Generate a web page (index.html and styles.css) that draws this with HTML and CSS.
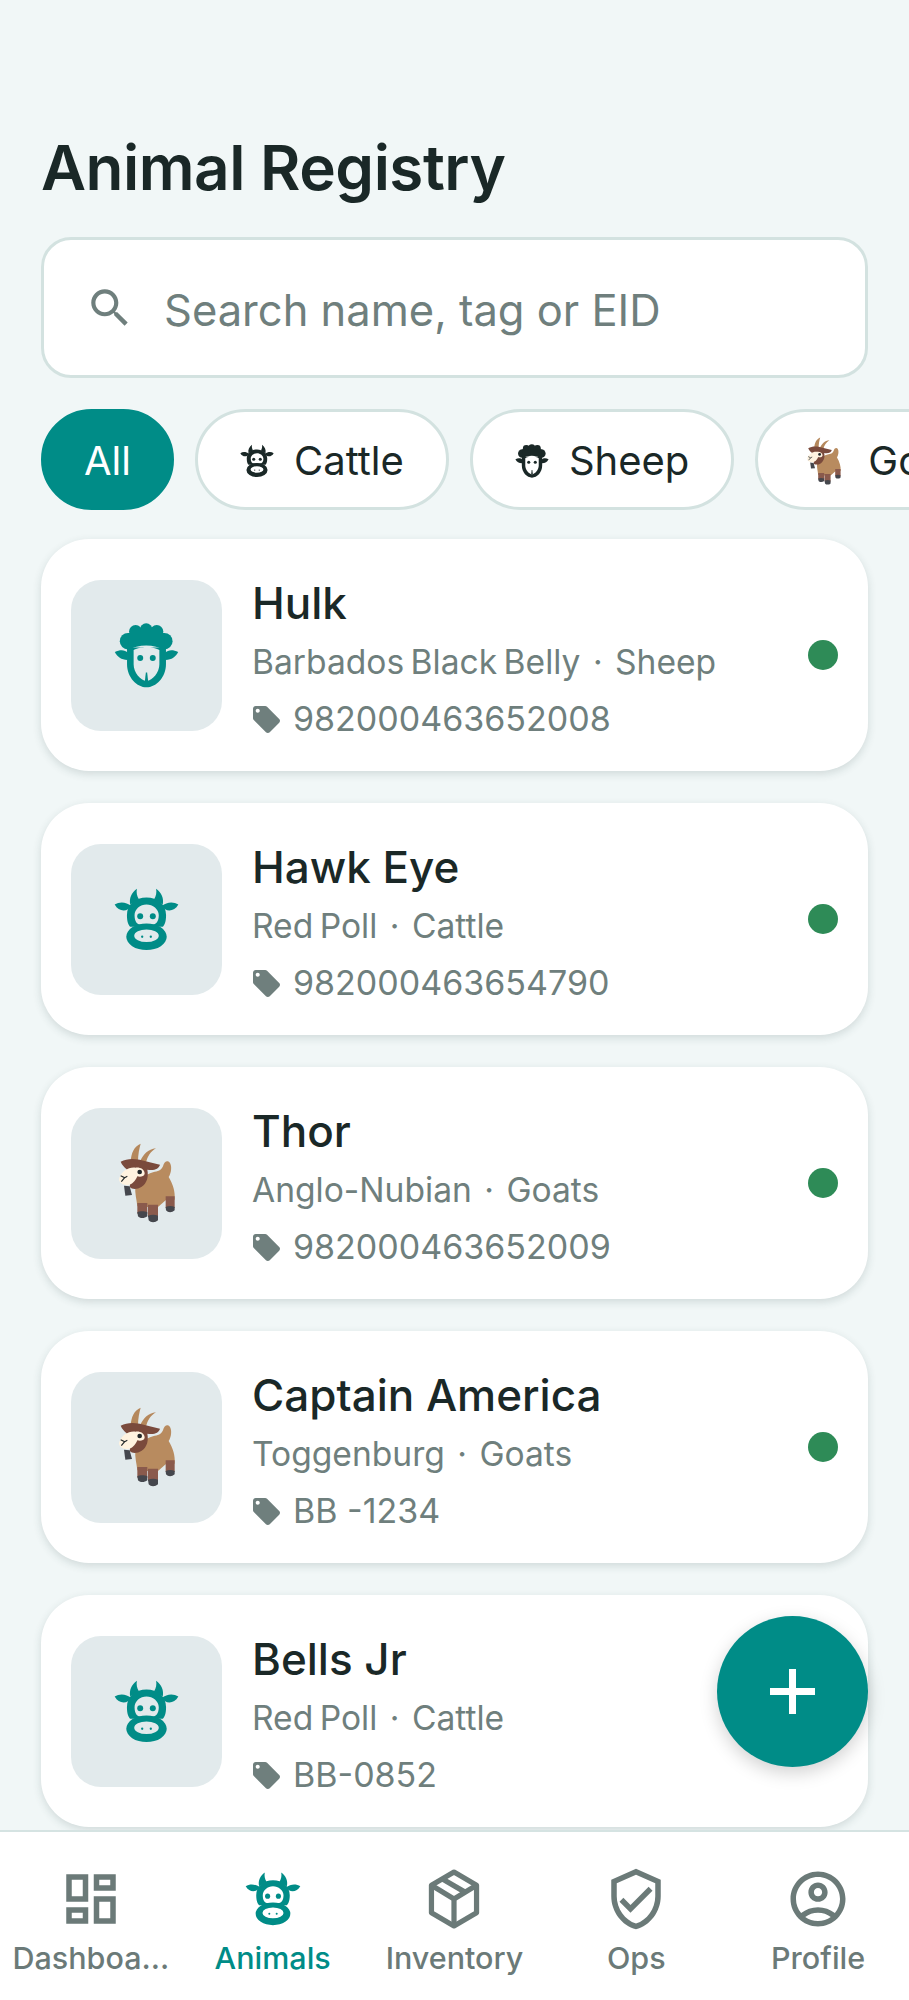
FILE: index.html
```html
<!DOCTYPE html>
<html lang="en">
<head>
    <meta charset="UTF-8">
    <meta name="viewport" content="width=device-width, initial-scale=1.0">
    <title>Animal Registry</title>
    <link rel="stylesheet" href="styles.css">
</head>
<body>

<!-- Animal icons, reused in chips, cards and nav -->
<svg class="icon-defs" aria-hidden="true">
    <defs>
        <symbol id="cow" viewBox="13 18 196 190">
            <path d="M82 20C66 32 58 48 62 68L88 52C82 42 80 32 82 20Z"/>
            <path d="M140 20C156 32 164 48 160 68L134 52C140 42 142 32 140 20Z"/>
            <path d="M15 68C30 58 50 60 65 72C55 90 28 92 15 68Z"/>
            <path d="M207 68C192 58 172 60 157 72C167 90 194 92 207 68Z"/>
            <path fill-rule="evenodd" d="M52 100C52 68 78 47 111 47C144 47 170 68 170 100C170 120 165 130 160 135H62C57 130 52 120 52 100ZM75 100C75 82 92 68 111 68C130 68 148 82 148 100C148 118 140 128 128 128H94C82 128 75 118 75 100Z"/>
            <path fill-rule="evenodd" d="M50 165a61 40 0 1 0 122 0a61 40 0 1 0 -122 0ZM74 162a37 19 0 1 0 74 0a37 19 0 1 0 -74 0Z"/>
            <circle cx="92" cy="103" r="9"/>
            <circle cx="130" cy="103" r="9"/>
            <circle cx="98" cy="165" r="3.5"/>
            <circle cx="124" cy="165" r="3.5"/>
        </symbol>
        <symbol id="sheep" viewBox="14 10 194 197">
            <circle cx="55" cy="65" r="25"/>
            <circle cx="78" cy="36" r="20"/>
            <circle cx="110" cy="30" r="19"/>
            <circle cx="142" cy="36" r="20"/>
            <circle cx="165" cy="65" r="25"/>
            <path d="M55 40H165V90C150 84 130 78 110 78C90 78 70 84 55 90Z"/>
            <path d="M15 98C30 90 45 90 55 100L53 122C35 122 22 112 15 98Z"/>
            <path d="M207 98C192 90 177 90 167 100L169 122C187 122 200 112 207 98Z"/>
            <path fill-rule="evenodd" d="M52 84H170V135C170 175 140 205 111 205C82 205 52 175 52 135ZM72 92V135C72 160 92 183 111 186C130 183 150 160 150 135V92C135 82 87 82 72 92Z"/>
            <path d="M109 160H113L116 187H106Z"/>
            <circle cx="92" cy="116" r="9"/>
            <circle cx="130" cy="116" r="9"/>
        </symbol>
        <symbol id="goat" viewBox="20 20 174 240">
            <path fill="#b5885c" d="M58 74C60 50 68 30 88 22C84 35 80 55 80 76Z"/>
            <path fill="#b5885c" d="M86 76C95 55 110 38 134 36C118 46 108 60 104 80Z"/>
            <path fill="#b88b5f" d="M72 150C90 130 100 115 125 108C140 105 150 102 155 90C158 75 170 70 176 80C182 90 180 110 172 122C185 145 192 165 190 190L163 192L140 212H108L78 210C76 190 70 170 72 150Z"/>
            <path fill="#8a5a4c" d="M78 200H108V232H78ZM110 205H140V242H110ZM163 180H190V215H163Z"/>
            <path fill="#45474d" d="M78 228C85 224 100 224 108 228V240C100 247 85 247 80 240ZM110 238C120 234 132 234 140 238V252C132 260 118 260 112 252ZM163 212C172 208 182 208 190 212V222C182 230 170 230 164 222Z"/>
            <path fill="#7a4a3c" d="M28 76C45 68 60 66 85 70C105 75 125 80 146 85C142 98 128 104 108 100C112 120 108 140 90 152C78 160 62 160 55 152C60 130 55 110 45 98C38 92 32 85 28 76Z"/>
            <path fill="#45474d" d="M38 148L55 150L62 176L42 178Z"/>
            <path fill="#fff3e0" d="M24 124C32 105 50 92 72 94C85 92 100 98 100 112C98 122 85 122 78 120C72 135 60 148 45 146C30 144 20 135 24 124Z"/>
            <circle fill="#22282a" cx="85" cy="107" r="7"/>
            <path fill="none" stroke="#22282a" stroke-width="3.5" d="M28 118L40 124L30 136M40 124L48 120"/>
        </symbol>
        <symbol id="tag" viewBox="2 2 20 20">
            <path d="M21.41 11.58l-9-9C12.05 2.22 11.55 2 11 2H4c-1.1 0-2 .9-2 2v7c0 .55.22 1.05.59 1.42l9 9c.36.36.86.58 1.41.58.55 0 1.05-.22 1.41-.59l7-7c.37-.36.59-.86.59-1.41 0-.55-.23-1.06-.59-1.42zM5.5 7C4.67 7 4 6.33 4 5.5S4.67 4 5.5 4 7 4.67 7 5.5 6.33 7 5.5 7z"/>
        </symbol>
    </defs>
</svg>

<div class="app">
    <h1 class="title">Animal Registry</h1>

    <div class="search">
        <svg class="search-icon" viewBox="0 0 24 24"><path d="M15.5 14h-.79l-.28-.27C15.41 12.59 16 11.11 16 9.5 16 5.91 13.09 3 9.5 3S3 5.91 3 9.5 5.91 16 9.5 16c1.61 0 3.09-.59 4.23-1.57l.27.28v.79l5 4.99L20.49 19l-4.99-5zm-6 0C7.01 14 5 11.99 5 9.5S7.01 5 9.5 5 14 7.01 14 9.5 11.99 14 9.5 14z"/></svg>
        <span class="search-text">Search name, tag or EID</span>
    </div>

    <div class="chips">
        <div class="chip active">All</div>
        <div class="chip"><svg class="chip-icon"><use href="#cow"/></svg>Cattle</div>
        <div class="chip"><svg class="chip-icon"><use href="#sheep"/></svg>Sheep</div>
        <div class="chip"><svg class="chip-goat"><use href="#goat"/></svg>Goats</div>
    </div>

    <div class="list">
        <div class="card">
            <div class="thumb"><svg class="thumb-icon"><use href="#sheep"/></svg></div>
            <div class="info">
                <div class="name">Hulk</div>
                <div class="breed">Barbados Black Belly <i>·</i> Sheep</div>
                <div class="tag"><svg class="tag-icon"><use href="#tag"/></svg>982000463652008</div>
            </div>
            <div class="status"></div>
        </div>
        <div class="card">
            <div class="thumb"><svg class="thumb-icon"><use href="#cow"/></svg></div>
            <div class="info">
                <div class="name">Hawk Eye</div>
                <div class="breed">Red Poll <i>·</i> Cattle</div>
                <div class="tag"><svg class="tag-icon"><use href="#tag"/></svg>982000463654790</div>
            </div>
            <div class="status"></div>
        </div>
        <div class="card">
            <div class="thumb"><svg class="thumb-goat"><use href="#goat"/></svg></div>
            <div class="info">
                <div class="name">Thor</div>
                <div class="breed">Anglo-Nubian <i>·</i> Goats</div>
                <div class="tag"><svg class="tag-icon"><use href="#tag"/></svg>982000463652009</div>
            </div>
            <div class="status"></div>
        </div>
        <div class="card">
            <div class="thumb"><svg class="thumb-goat"><use href="#goat"/></svg></div>
            <div class="info">
                <div class="name">Captain America</div>
                <div class="breed">Toggenburg <i>·</i> Goats</div>
                <div class="tag"><svg class="tag-icon"><use href="#tag"/></svg>BB -1234</div>
            </div>
            <div class="status"></div>
        </div>
        <div class="card">
            <div class="thumb"><svg class="thumb-icon"><use href="#cow"/></svg></div>
            <div class="info">
                <div class="name">Bells Jr</div>
                <div class="breed">Red Poll <i>·</i> Cattle</div>
                <div class="tag"><svg class="tag-icon"><use href="#tag"/></svg>BB-0852</div>
            </div>
        </div>
    </div>

    <!-- Floating add button -->
    <div class="fab"><span class="fab-plus"></span></div>

    <nav class="nav">
        <div class="nav-item">
            <svg class="nav-icon" viewBox="0 0 24 24"><path d="M19 5v2h-4V5h4M9 5v6H5V5h4m10 8v6h-4v-6h4M9 17v2H5v-2h4M21 3h-8v6h8V3zM11 3H3v10h8V3zm10 8h-8v10h8V11zm-10 4H3v6h8v-6z"/></svg>
            <span>Dashboa...</span>
        </div>
        <div class="nav-item active">
            <svg class="nav-cow"><use href="#cow"/></svg>
            <span>Animals</span>
        </div>
        <div class="nav-item">
            <svg class="nav-icon box-icon" viewBox="0 0 24 24"><path d="M12 2.2L20.2 7V17L12 21.8L3.8 17V7Z"/><path d="M3.8 7L12 12L20.2 7M12 12V21.8M7.8 4.7L16 9.5"/></svg>
            <span>Inventory</span>
        </div>
        <div class="nav-item">
            <svg class="nav-icon" viewBox="0 0 24 24"><path d="M12 1L3 5v6c0 5.55 3.84 10.74 9 12 5.16-1.26 9-6.45 9-12V5l-9-4zm7 10c0 4.52-2.98 8.69-7 9.93-4.02-1.24-7-5.41-7-9.93V6.3l7-3.11 7 3.11V11zm-11.59.59L6 13l4 4 8-8-1.41-1.42L10 14.17z"/></svg>
            <span>Ops</span>
        </div>
        <div class="nav-item">
            <svg class="nav-icon" viewBox="0 0 24 24"><path d="M12 2C6.48 2 2 6.48 2 12s4.48 10 10 10 10-4.48 10-10S17.52 2 12 2zM7.35 18.5C8.66 17.56 10.26 17 12 17s3.34.56 4.65 1.5C15.34 19.44 13.74 20 12 20s-3.34-.56-4.65-1.5zm10.79-1.38C16.45 15.8 14.32 15 12 15s-4.45.8-6.14 2.12C4.7 15.73 4 13.95 4 12c0-4.42 3.58-8 8-8s8 3.58 8 8c0 1.95-.7 3.73-1.86 5.12zM12 6c-1.93 0-3.5 1.57-3.5 3.5S10.07 13 12 13s3.5-1.57 3.5-3.5S13.93 6 12 6zm0 5c-.83 0-1.5-.67-1.5-1.5S11.17 8 12 8s1.5.67 1.5 1.5S12.83 11 12 11z"/></svg>
            <span>Profile</span>
        </div>
    </nav>
</div>

</body>
</html>
```

FILE: styles.css
```css
body {
    margin: 0;
    font-family: Inter, "Liberation Sans", sans-serif;
    background-color: #f1f7f7;
    color: #1a2827;
}
.icon-defs {
    display: block;
    width: 0;
    height: 0;
}
svg {
    fill: currentColor;
}
.app {
    position: relative;
    height: 2000px;
    display: flex;
    flex-direction: column;
    overflow: hidden;
}
.title {
    margin: 132px 41px 0;
    font-size: 62px;
    line-height: 72px;
    font-weight: 600;
    letter-spacing: -0.5px;
}
.search {
    display: flex;
    align-items: center;
    gap: 29px;
    height: 141px;
    box-sizing: border-box;
    margin: 33px 41px 0;
    padding-left: 41px;
    background: white;
    border: 3px solid #d3e2e0;
    border-radius: 30px;
    color: #6f7f7d;
    font-size: 43.5px;
}
.search-icon {
    width: 50px;
    height: 50px;
}
.search-text {
    padding-top: 4px;
}
.chips {
    display: flex;
    gap: 21px;
    margin: 31px 0 0 41px;
}
.chip {
    display: flex;
    align-items: center;
    gap: 20px;
    flex-shrink: 0;
    height: 101px;
    box-sizing: border-box;
    padding: 2px 42px 0;
    background: white;
    border: 3px solid #d3e2e0;
    border-radius: 51px;
    font-size: 40px;
}
.chip.active {
    padding: 2px 40px 0;
    background: #008c87;
    border-color: #008c87;
    color: white;
}
.chip-icon {
    width: 34px;
    height: 34px;
}
.chip-goat {
    width: 48px;
    height: 48px;
}
.list {
    display: flex;
    flex-direction: column;
    gap: 32px;
    margin: 29px 41px 0;
}
.card {
    display: flex;
    align-items: center;
    flex-shrink: 0;
    gap: 30px;
    height: 232px;
    box-sizing: border-box;
    padding: 0 30px;
    background: white;
    border-radius: 48px;
    box-shadow: 0 3px 8px rgba(40, 70, 70, 0.16);
}
.thumb {
    display: flex;
    align-items: center;
    justify-content: center;
    flex-shrink: 0;
    width: 151px;
    height: 151px;
    background: #e2eaec;
    border-radius: 30px;
    color: #008c87;
}
.thumb-icon {
    width: 65px;
    height: 65px;
}
.thumb-goat {
    width: 58px;
    height: 80px;
}
.info {
    flex: 1;
    min-width: 0;
    padding-top: 9px;
}
.name {
    font-size: 44px;
    line-height: 56px;
    font-weight: 500;
}
.breed {
    margin-top: 5px;
    font-size: 33.6px;
    line-height: 52px;
    word-spacing: -3px;
    color: #6f7f7d;
}
.breed i {
    font-style: normal;
    margin: 0 6px;
}
.tag {
    display: flex;
    align-items: center;
    gap: 13px;
    margin-top: 6px;
    font-size: 34px;
    line-height: 50px;
    color: #6f7f7d;
}
.tag-icon {
    width: 27px;
    height: 27px;
    margin-left: 1px;
}
.status {
    flex-shrink: 0;
    width: 30px;
    height: 30px;
    border-radius: 50%;
    background: #2e8b57;
}
.fab {
    position: absolute;
    left: 717px;
    top: 1616px;
    width: 151px;
    height: 151px;
    border-radius: 50%;
    background: #008c87;
    box-shadow: 0 6px 18px rgba(0, 0, 0, 0.18);
}
/* plus sign made of two bars */
.fab-plus {
    position: absolute;
    left: 53px;
    top: 53px;
    width: 45px;
    height: 45px;
    background:
        linear-gradient(white, white) center / 45px 7px no-repeat,
        linear-gradient(white, white) center / 7px 45px no-repeat;
}
.nav {
    position: absolute;
    left: 0;
    right: 0;
    bottom: 0;
    display: grid;
    grid-template-columns: repeat(5, 1fr);
    height: 170px;
    box-sizing: border-box;
    padding-top: 34px;
    background: white;
    border-top: 2px solid #d5e3e2;
    color: #6b7a78;
}
.nav-item {
    display: flex;
    flex-direction: column;
    align-items: center;
    font-size: 30.5px;
    font-weight: 500;
    line-height: 40px;
}
.nav-item.active {
    color: #008c87;
}
.nav-icon {
    width: 66px;
    height: 66px;
    margin-bottom: 6px;
}
.box-icon {
    fill: none;
    stroke: currentColor;
    stroke-width: 1.9;
    stroke-linejoin: round;
}
.nav-cow {
    width: 56px;
    height: 54px;
    margin: 6px 0 12px;
}
```
